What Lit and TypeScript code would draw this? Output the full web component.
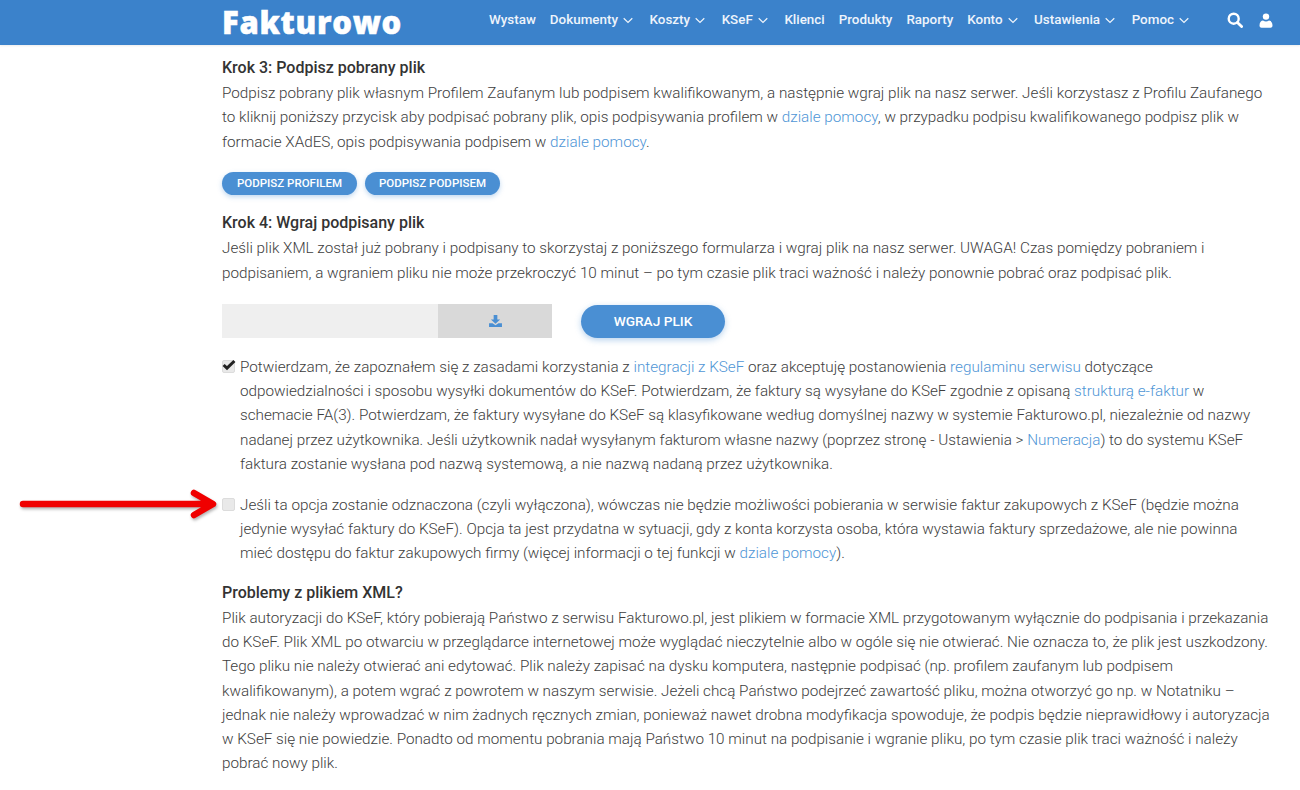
import { LitElement, html, css } from "lit";
import { customElement } from "lit/decorators.js";

const chev = html`<svg class="chev" viewBox="0 0 10 7" width="10" height="7"><path d="M.7 1.2 5 5.4 9.3 1.2" fill="none" stroke="currentColor" stroke-width="1.2"/></svg>`;

@customElement("app-root")
export class AppRoot extends LitElement {
  static styles = css`
    :host { display: block; width: 1300px; height: 790px; overflow: hidden; position: relative; background: #fff; font-family: Roboto, "Liberation Sans", sans-serif; color: #3d3d3d; font-size: 15.26px; font-weight: 300; line-height: 24.4px; }
    a { color: #4f96d6; text-decoration: none; }
    header { height: 45px; background: #3b82cb; display: flex; align-items: center; padding: 0 27px 5px 222px; box-sizing: border-box; color: #fff; box-shadow: 0 1px 2px rgba(0,0,0,.08); }
    .logo { font-family: "Open Sans", sans-serif; font-weight: 800; font-size: 31px; line-height: 40px; letter-spacing: .7px; width: 267px; margin-top: 3px; -webkit-text-stroke: .5px #fff; }
    nav { display: flex; gap: 14px; font-size: 13.4px; font-weight: 500; line-height: 40px; flex: 1; color: #eef4fb; }
    nav span { display: inline-flex; align-items: center; gap: 5px; white-space: nowrap; }
    .chev { display: block; margin: 1px 2.6px 0 0; }
    .icons { display: flex; gap: 16px; align-items: center; }
    main { padding: 10px 20px 0 222px; }
    h3 { margin: 0; font-size: 16px; font-weight: 500; line-height: 26px; color: #333; }
    p { margin: 0; white-space: nowrap; }
    .tight { line-height: 24.2px; }
    .final { line-height: 24.3px; }
    .btns { display: flex; gap: 8px; margin: 18px 0 15px; }
    .btn { width: 135px; text-align: center; background: #4a8fd3; color: #fff; font-size: 11.5px; font-weight: 500; text-transform: uppercase; border-radius: 12px; height: 23px; line-height: 23px; box-shadow: 0 2px 5px rgba(74,143,211,.35); }
    .upload { display: flex; align-items: center; margin: 19px 0 17px; }
    .file { width: 216px; height: 34px; background: #efefef; }
    .pick { width: 114px; height: 34px; background: #d9d9d9; display: flex; align-items: center; justify-content: center; color: #4a8fd3; }
    .send { margin-left: 29px; width: 144px; height: 33px; line-height: 33px; border-radius: 17px; background: #4a8fd3; color: #fff; text-align: center; font-size: 13.7px; font-weight: 500; box-shadow: 0 2px 6px rgba(74,143,211,.4); }
    .check { display: flex; gap: 5px; margin-bottom: 17px; }
    .check.last { margin-bottom: 14px; }
    .box { flex: none; width: 13px; height: 13px; margin-top: 5px; border-radius: 2px; background: #e9e9e9; border: 1px solid #dcdcdc; box-sizing: border-box; position: relative; }
    .box svg { position: absolute; left: -1px; top: -2px; }
    .arrow { position: absolute; left: 18px; top: 487px; filter: drop-shadow(1px 2px 1.5px rgba(0,0,0,.3)); }
  `;

  render() {
    return html`
      <header>
        <div class="logo">Fakturowo</div>
        <nav>
          <span>Wystaw</span><span>Dokumenty ${chev}</span><span>Koszty ${chev}</span><span>KSeF ${chev}</span>
          <span>Klienci</span><span>Produkty</span><span>Raporty</span><span>Konto ${chev}</span>
          <span>Ustawienia ${chev}</span><span>Pomoc ${chev}</span>
        </nav>
        <div class="icons">
          <svg width="16" height="16" viewBox="0 0 16 16"><circle cx="6.7" cy="6.7" r="5" fill="none" stroke="#fff" stroke-width="2.4"/><path d="M10.4 10.4 14.6 14.6" stroke="#fff" stroke-width="2.8" stroke-linecap="round"/></svg>
          <svg width="14" height="15" viewBox="0 0 13 15"><circle cx="6.5" cy="3.6" r="3.2" fill="#fff"/><path d="M0 12.5C0 9.5 1.8 7.6 3.5 7.6c1 .7 2 1 3 1s2-.3 3-1C11.2 7.6 13 9.5 13 12.5 13 14 12 14.7 11 14.7H2C1 14.7 0 14 0 12.5Z" fill="#fff"/></svg>
        </div>
      </header>
      <main>
        <h3>Krok 3: Podpisz pobrany plik</h3>
        <p>Podpisz pobrany plik własnym Profilem Zaufanym lub podpisem kwalifikowanym, a następnie wgraj plik na nasz serwer. Jeśli korzystasz z Profilu Zaufanego<br>
        to kliknij poniższy przycisk aby podpisać pobrany plik, opis podpisywania profilem w <a>dziale pomocy</a>, w przypadku podpisu kwalifikowanego podpisz plik w<br>
        formacie XAdES, opis podpisywania podpisem w <a>dziale pomocy</a>.</p>
        <div class="btns"><div class="btn">Podpisz profilem</div><div class="btn">Podpisz podpisem</div></div>
        <h3>Krok 4: Wgraj podpisany plik</h3>
        <p>Jeśli plik XML został już pobrany i podpisany to skorzystaj z poniższego formularza i wgraj plik na nasz serwer. UWAGA! Czas pomiędzy pobraniem i<br>
        podpisaniem, a wgraniem pliku nie może przekroczyć 10 minut – po tym czasie plik traci ważność i należy ponownie pobrać oraz podpisać plik.</p>
        <div class="upload">
          <div class="file"></div>
          <div class="pick"><svg width="13" height="12" viewBox="0 0 14 13"><path d="M5 0h4v5h3L7 9.5 2 5h3Z" fill="currentColor"/><path d="M0 9h3.8L7 11l3.2-2H14v4H0Z" fill="currentColor"/></svg></div>
          <div class="send">WGRAJ PLIK</div>
        </div>
        <div class="check">
          <div class="box"><svg width="14" height="13" viewBox="0 0 14 13"><path d="M1.6 6 5 9.2 12.4 2" fill="none" stroke="#222" stroke-width="3"/></svg></div>
          <p class="tight">Potwierdzam, że zapoznałem się z zasadami korzystania z <a>integracji z KSeF</a> oraz akceptuję postanowienia <a>regulaminu serwisu</a> dotyczące<br>
          odpowiedzialności i sposobu wysyłki dokumentów do KSeF. Potwierdzam, że faktury są wysyłane do KSeF zgodnie z opisaną <a>strukturą e-faktur</a> w<br>
          schemacie FA(3). Potwierdzam, że faktury wysyłane do KSeF są klasyfikowane według domyślnej nazwy w systemie Fakturowo.pl, niezależnie od nazwy<br>
          nadanej przez użytkownika. Jeśli użytkownik nadał wysyłanym fakturom własne nazwy (poprzez stronę - Ustawienia &gt; <a>Numeracja</a>) to do systemu KSeF<br>
          faktura zostanie wysłana pod nazwą systemową, a nie nazwą nadaną przez użytkownika.</p>
        </div>
        <div class="check last">
          <div class="box"></div>
          <p class="tight">Jeśli ta opcja zostanie odznaczona (czyli wyłączona), wówczas nie będzie możliwości pobierania w serwisie faktur zakupowych z KSeF (będzie można<br>
          jedynie wysyłać faktury do KSeF). Opcja ta jest przydatna w sytuacji, gdy z konta korzysta osoba, która wystawia faktury sprzedażowe, ale nie powinna<br>
          mieć dostępu do faktur zakupowych firmy (więcej informacji o tej funkcji w <a>dziale pomocy</a>).</p>
        </div>
        <h3>Problemy z plikiem XML?</h3>
        <p class="final">Plik autoryzacji do KSeF, który pobierają Państwo z serwisu Fakturowo.pl, jest plikiem w formacie XML przygotowanym wyłącznie do podpisania i przekazania<br>
        do KSeF. Plik XML po otwarciu w przeglądarce internetowej może wyglądać nieczytelnie albo w ogóle się nie otwierać. Nie oznacza to, że plik jest uszkodzony.<br>
        Tego pliku nie należy otwierać ani edytować. Plik należy zapisać na dysku komputera, następnie podpisać (np. profilem zaufanym lub podpisem<br>
        kwalifikowanym), a potem wgrać z powrotem w naszym serwisie. Jeżeli chcą Państwo podejrzeć zawartość pliku, można otworzyć go np. w Notatniku –<br>
        jednak nie należy wprowadzać w nim żadnych ręcznych zmian, ponieważ nawet drobna modyfikacja spowoduje, że podpis będzie nieprawidłowy i autoryzacja<br>
        w KSeF się nie powiedzie. Ponadto od momentu pobrania mają Państwo 10 minut na podpisanie i wgranie pliku, po tym czasie plik traci ważność i należy<br>
        pobrać nowy plik.</p>
      </main>
      <svg class="arrow" width="202" height="34" viewBox="0 0 202 34"><path d="M5 17H193M176 6 195 17 176 28" fill="none" stroke="#f00000" stroke-width="6.5" stroke-linecap="round" stroke-linejoin="round"/></svg>
    `;
  }
}
